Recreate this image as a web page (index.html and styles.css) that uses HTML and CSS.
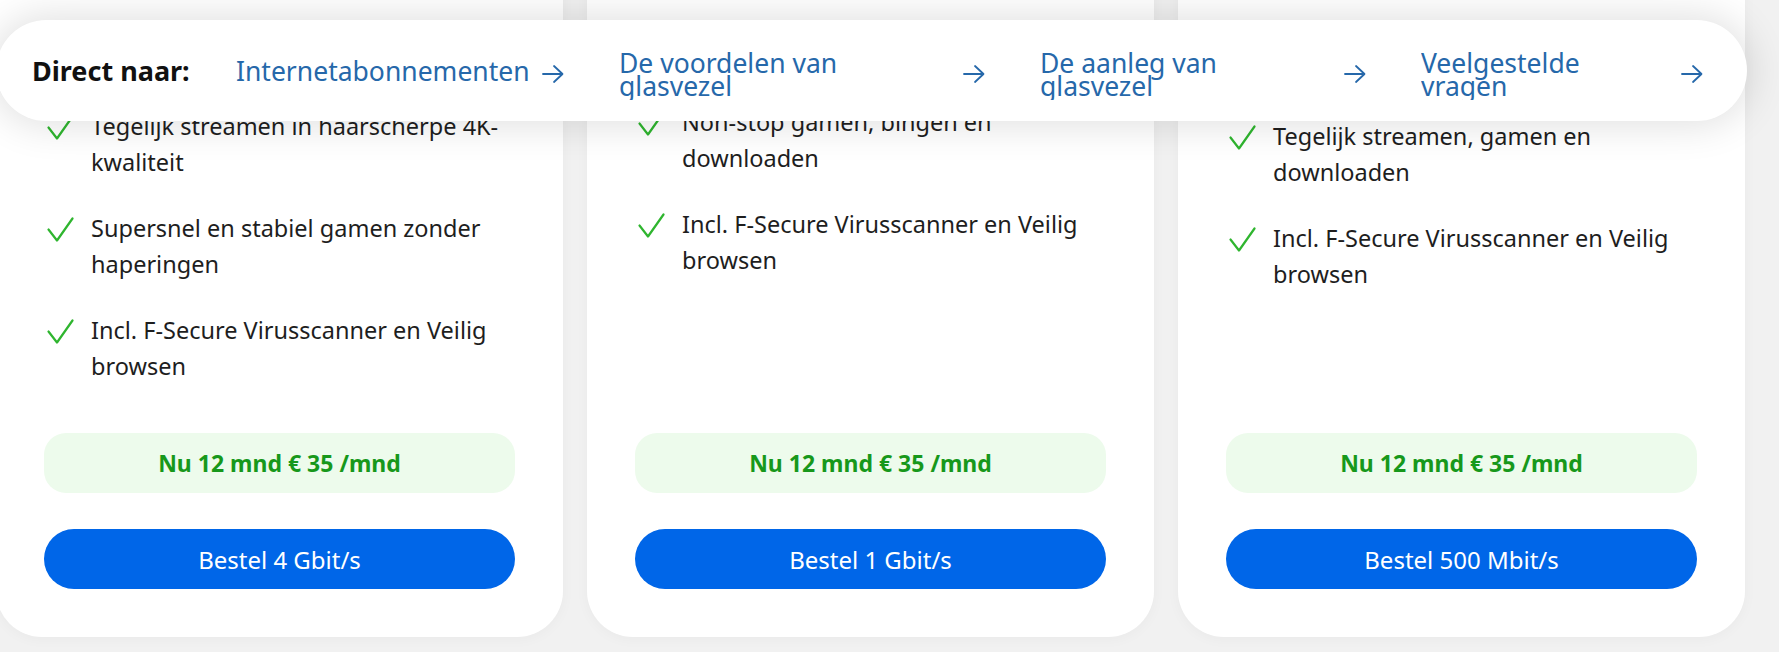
FILE: index.html
```html
<!DOCTYPE html>
<html lang="nl">
<head>
<meta charset="utf-8">
<title>Glasvezel abonnementen</title>
<link rel="stylesheet" href="styles.css">
</head>
<body>
<div class="page">
  <nav class="jump-nav">
    <span class="jump-label">Direct naar:</span>
    <div class="jump-links">
      <a class="jump-link jump-link--a" href="#abonnementen">
        <span class="jump-text">Internetabonnementen</span>
        <svg class="arrow" viewBox="0 0 22 22" width="22" height="22"><path d="M1 11H20M12 3l8.5 8L12 19"/></svg>
      </a>
      <a class="jump-link jump-link--b" href="#voordelen">
        <span class="jump-text jump-text--wrap">De voordelen van glasvezel</span>
        <svg class="arrow" viewBox="0 0 22 22" width="22" height="22"><path d="M1 11H20M12 3l8.5 8L12 19"/></svg>
      </a>
      <a class="jump-link jump-link--c" href="#aanleg">
        <span class="jump-text jump-text--wrap">De aanleg van glasvezel</span>
        <svg class="arrow" viewBox="0 0 22 22" width="22" height="22"><path d="M1 11H20M12 3l8.5 8L12 19"/></svg>
      </a>
      <a class="jump-link jump-link--d" href="#vragen">
        <span class="jump-text jump-text--wrap">Veelgestelde vragen</span>
        <svg class="arrow" viewBox="0 0 22 22" width="22" height="22"><path d="M1 11H20M12 3l8.5 8L12 19"/></svg>
      </a>
    </div>
  </nav>

  <div class="cards">
    <article class="card card--a">
      <ul class="usp-list">
        <li class="usp"><svg class="check" viewBox="0 0 27 25" width="27" height="25"><path d="M1.5 12.5L10 23.5L25.5 1.5"/></svg><span>Tegelijk streamen in haarscherpe 4K-kwaliteit</span></li>
        <li class="usp"><svg class="check" viewBox="0 0 27 25" width="27" height="25"><path d="M1.5 12.5L10 23.5L25.5 1.5"/></svg><span>Supersnel en stabiel gamen zonder haperingen</span></li>
        <li class="usp"><svg class="check" viewBox="0 0 27 25" width="27" height="25"><path d="M1.5 12.5L10 23.5L25.5 1.5"/></svg><span>Incl. F-Secure Virusscanner en Veilig browsen</span></li>
      </ul>
      <div class="promo">Nu 12 mnd € 35 /mnd</div>
      <a class="order-btn" href="#bestel-4">Bestel 4 Gbit/s</a>
    </article>

    <article class="card card--b">
      <ul class="usp-list">
        <li class="usp"><svg class="check" viewBox="0 0 27 25" width="27" height="25"><path d="M1.5 12.5L10 23.5L25.5 1.5"/></svg><span>Non-stop gamen, bingen en downloaden</span></li>
        <li class="usp"><svg class="check" viewBox="0 0 27 25" width="27" height="25"><path d="M1.5 12.5L10 23.5L25.5 1.5"/></svg><span>Incl. F-Secure Virusscanner en Veilig browsen</span></li>
      </ul>
      <div class="promo">Nu 12 mnd € 35 /mnd</div>
      <a class="order-btn" href="#bestel-1">Bestel 1 Gbit/s</a>
    </article>

    <article class="card card--c">
      <ul class="usp-list">
        <li class="usp"><svg class="check" viewBox="0 0 27 25" width="27" height="25"><path d="M1.5 12.5L10 23.5L25.5 1.5"/></svg><span>Tegelijk streamen, gamen en downloaden</span></li>
        <li class="usp"><svg class="check" viewBox="0 0 27 25" width="27" height="25"><path d="M1.5 12.5L10 23.5L25.5 1.5"/></svg><span>Incl. F-Secure Virusscanner en Veilig browsen</span></li>
      </ul>
      <div class="promo">Nu 12 mnd € 35 /mnd</div>
      <a class="order-btn" href="#bestel-500">Bestel 500 Mbit/s</a>
    </article>
  </div>
</div>
</body>
</html>
```

FILE: styles.css
```css
* { box-sizing: border-box; }

html, body {
  margin: 0;
  padding: 0;
  height: 100%;
  overflow: hidden;
}

body {
  background: #f1f1f1;
  font-family: "Noto Sans", "Open Sans", sans-serif;
  color: #1e1e1e;
}

.page {
  position: relative;
  height: 652px;
  overflow: hidden;
}

/* ---------- jump navigation (sticky overlay) ---------- */
.jump-nav {
  position: absolute;
  top: 20px;
  left: -4px;
  width: 1751px;
  height: 101px;
  background: #fff;
  border-radius: 51px;
  box-shadow: 0 0 38px 5px rgba(0, 0, 0, 0.12);
  display: flex;
  align-items: center;
  padding-left: 36px;
  z-index: 2;
}

.jump-label {
  flex: none;
  width: 204px;
  font-size: 27px;
  font-weight: 700;
  line-height: 22px;
  color: #111;
}

.jump-links {
  display: flex;
  align-items: center;
  gap: 55px;
}

.jump-link {
  flex: none;
  display: flex;
  align-items: center;
  justify-content: space-between;
  color: #2668aa;
  text-decoration: none;
}

.jump-link--a { width: 328px; }
.jump-link--b { width: 366px; }
.jump-link--c { width: 326px; }
.jump-link--d { width: 282px; }

.jump-text {
  display: block;
  font-size: 26.5px;
  line-height: 22px;
  white-space: nowrap;
}

.jump-text--wrap {
  white-space: normal;
  max-width: 240px;
  line-height: 23px;
  height: 48px;
  overflow: hidden;
  margin-top: 10px;
}

.arrow {
  flex: none;
  margin-top: 6px;
  fill: none;
  stroke: #2668aa;
  stroke-width: 1.8;
  stroke-linecap: round;
  stroke-linejoin: round;
}

/* ---------- product cards ---------- */
.cards {
  display: grid;
  grid-template-columns: repeat(3, 567px);
  column-gap: 24px;
  margin-left: -4px;
  margin-top: -60px;
}

.card {
  background: #fff;
  border-radius: 46px;
  box-shadow: 0 2px 14px rgba(0, 0, 0, 0.035);
  display: flex;
  flex-direction: column;
  padding: 168px 48px 48px;
}

.card--b { padding-top: 164px; }
.card--c { padding-top: 178px; }

.usp-list {
  list-style: none;
  margin: 0 0 49px;
  padding: 0 0 0 3px;
  display: flex;
  flex-direction: column;
  gap: 30px;
}

.usp {
  display: flex;
  align-items: flex-start;
  gap: 17px;
  font-size: 23.5px;
  line-height: 36px;
  color: #1e1e1e;
}

.usp span { flex: 1; }

.check {
  flex: none;
  margin-top: 7px;
  fill: none;
  stroke: #2fb52f;
  stroke-width: 2.2;
  stroke-linecap: round;
  stroke-linejoin: round;
}

.promo {
  margin-top: auto;
  height: 60px;
  border-radius: 22px;
  background: #edfbec;
  color: #17981b;
  font-weight: 700;
  font-size: 23px;
  display: flex;
  align-items: center;
  justify-content: center;
}

.order-btn {
  margin-top: 36px;
  height: 60px;
  border-radius: 30px;
  background: #0066e8;
  color: #fff;
  font-size: 24px;
  text-decoration: none;
  display: flex;
  align-items: center;
  justify-content: center;
}
```
